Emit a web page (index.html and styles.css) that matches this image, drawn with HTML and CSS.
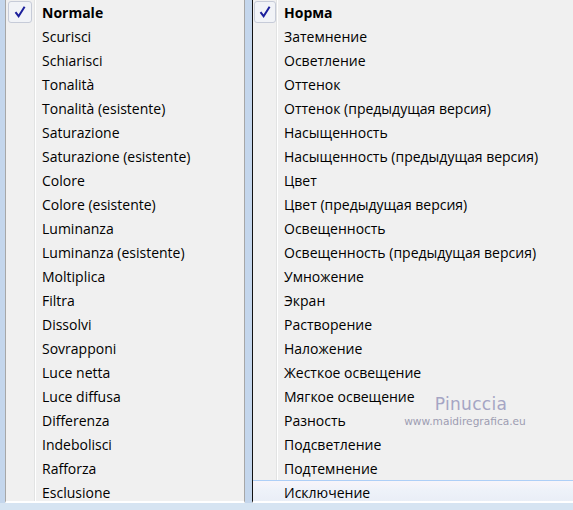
FILE: index.html
```html
<!DOCTYPE html>
<html>
<head>
<meta charset="utf-8">
<link rel="stylesheet" href="styles.css">
</head>
<body>
<div class="stage">
  <div class="menu menu-left">
    <div class="row checked"><div class="gutter"><span class="checkbox"><svg viewBox="0 0 16 16" width="16" height="16"><path d="M3.5 8.2 L6.6 12.2 L12.6 2.8" fill="none" stroke="#1b1f9c" stroke-width="2"/></svg></span></div><div class="label bold">Normale</div></div>
    <div class="row"><div class="gutter"></div><div class="label">Scurisci</div></div>
    <div class="row"><div class="gutter"></div><div class="label">Schiarisci</div></div>
    <div class="row"><div class="gutter"></div><div class="label">Tonalità</div></div>
    <div class="row"><div class="gutter"></div><div class="label">Tonalità (esistente)</div></div>
    <div class="row"><div class="gutter"></div><div class="label">Saturazione</div></div>
    <div class="row"><div class="gutter"></div><div class="label">Saturazione (esistente)</div></div>
    <div class="row"><div class="gutter"></div><div class="label">Colore</div></div>
    <div class="row"><div class="gutter"></div><div class="label">Colore (esistente)</div></div>
    <div class="row"><div class="gutter"></div><div class="label">Luminanza</div></div>
    <div class="row"><div class="gutter"></div><div class="label">Luminanza (esistente)</div></div>
    <div class="row"><div class="gutter"></div><div class="label">Moltiplica</div></div>
    <div class="row"><div class="gutter"></div><div class="label">Filtra</div></div>
    <div class="row"><div class="gutter"></div><div class="label">Dissolvi</div></div>
    <div class="row"><div class="gutter"></div><div class="label">Sovrapponi</div></div>
    <div class="row"><div class="gutter"></div><div class="label">Luce netta</div></div>
    <div class="row"><div class="gutter"></div><div class="label">Luce diffusa</div></div>
    <div class="row"><div class="gutter"></div><div class="label">Differenza</div></div>
    <div class="row"><div class="gutter"></div><div class="label">Indebolisci</div></div>
    <div class="row"><div class="gutter"></div><div class="label">Rafforza</div></div>
    <div class="row"><div class="gutter"></div><div class="label">Esclusione</div></div>
  </div>
  <div class="menu menu-right">
    <div class="row checked"><div class="gutter"><span class="checkbox"><svg viewBox="0 0 16 16" width="16" height="16"><path d="M3.5 8.2 L6.6 12.2 L12.6 2.8" fill="none" stroke="#1b1f9c" stroke-width="2"/></svg></span></div><div class="label bold">Норма</div></div>
    <div class="row"><div class="gutter"></div><div class="label">Затемнение</div></div>
    <div class="row"><div class="gutter"></div><div class="label">Осветление</div></div>
    <div class="row"><div class="gutter"></div><div class="label">Оттенок</div></div>
    <div class="row"><div class="gutter"></div><div class="label">Оттенок (предыдущая версия)</div></div>
    <div class="row"><div class="gutter"></div><div class="label">Насыщенность</div></div>
    <div class="row"><div class="gutter"></div><div class="label">Насыщенность (предыдущая версия)</div></div>
    <div class="row"><div class="gutter"></div><div class="label">Цвет</div></div>
    <div class="row"><div class="gutter"></div><div class="label">Цвет (предыдущая версия)</div></div>
    <div class="row"><div class="gutter"></div><div class="label">Освещенность</div></div>
    <div class="row"><div class="gutter"></div><div class="label">Освещенность (предыдущая версия)</div></div>
    <div class="row"><div class="gutter"></div><div class="label">Умножение</div></div>
    <div class="row"><div class="gutter"></div><div class="label">Экран</div></div>
    <div class="row"><div class="gutter"></div><div class="label">Растворение</div></div>
    <div class="row"><div class="gutter"></div><div class="label">Наложение</div></div>
    <div class="row"><div class="gutter"></div><div class="label">Жесткое освещение</div></div>
    <div class="row"><div class="gutter"></div><div class="label">Мягкое освещение</div></div>
    <div class="row"><div class="gutter"></div><div class="label">Разность</div></div>
    <div class="row"><div class="gutter"></div><div class="label">Подсветление</div></div>
    <div class="row"><div class="gutter"></div><div class="label">Подтемнение</div></div>
    <div class="row hover"><div class="gutter"></div><div class="label">Исключение</div></div>
    <div class="watermark">
      <div class="wm-name">Pinuccia</div>
      <div class="wm-url">www.maidiregrafica.eu</div>
    </div>
  </div>
</div>
</body>
</html>
```
FILE: styles.css
```css
html, body {
  margin: 0;
  padding: 0;
}
body {
  width: 573px;
  height: 510px;
  overflow: hidden;
  background: linear-gradient(to bottom, #c4d6ec 0, #c4d6ec 503px, #d6e4f2 503px, #d6e4f2 100%);
  font-family: "Open Sans", "Noto Sans", sans-serif;
  font-size: 14px;
  color: #000;
}
.stage {
  display: flex;
  align-items: flex-start;
  height: 510px;
}
.menu {
  position: relative;
  height: 501px;
  overflow: hidden;
  background: #f0f0f0;
  border-bottom: 2px solid #ffffff;
  display: flex;
  flex-direction: column;
}
.menu-left {
  margin-left: 5px;
  width: 238px;
  border-left: 1px solid #a7a7a7;
  border-right: 1px solid #a7a7a7;
}
.menu-right {
  margin-left: 7px;
  flex: 1;
  border-left: 1px solid #111;
}
.row {
  display: flex;
  align-items: center;
  height: 24px;
  flex: none;
  box-sizing: border-box;
}
.gutter {
  align-self: stretch;
  display: flex;
  align-items: center;
  box-sizing: border-box;
  border-right: 1px solid #e2e3e3;
  box-shadow: 1px 0 0 #ffffff;
}
.menu-left .gutter {
  width: 29px;
  padding-left: 2px;
}
.menu-right .gutter {
  width: 24px;
  padding-left: 1px;
}
.label {
  padding-left: 7px;
  white-space: nowrap;
  line-height: 24px;
  position: relative;
  top: 1px;
}
.bold {
  font-weight: bold;
}
.checkbox {
  display: flex;
  align-items: center;
  justify-content: center;
  box-sizing: border-box;
  width: 22px;
  height: 22px;
  border: 1px solid #c6cbd8;
  border-radius: 3px;
  background: #f1f3f7;
}
.menu-left .checkbox {
  width: 24px;
}
.row.hover {
  border-top: 1px solid #aecff7;
  background: linear-gradient(to bottom, #f8f5fa 0, #eef2f9 40%, #e8edf6 100%);
}
.row.hover .label {
  top: 0;
}
.row.hover .gutter {
  border-right-color: transparent;
  box-shadow: none;
}
.watermark {
  position: absolute;
  left: 149px;
  top: 393px;
  width: 126px;
  text-align: center;
  color: #a5a5c4;
  font-family: "DejaVu Sans", sans-serif;
}
.wm-name {
  font-size: 17px;
  line-height: 22px;
  letter-spacing: 0.3px;
  padding-left: 12px;
}
.wm-url {
  font-size: 10.6px;
  line-height: 12px;
  color: #9d9db2;
}
```
